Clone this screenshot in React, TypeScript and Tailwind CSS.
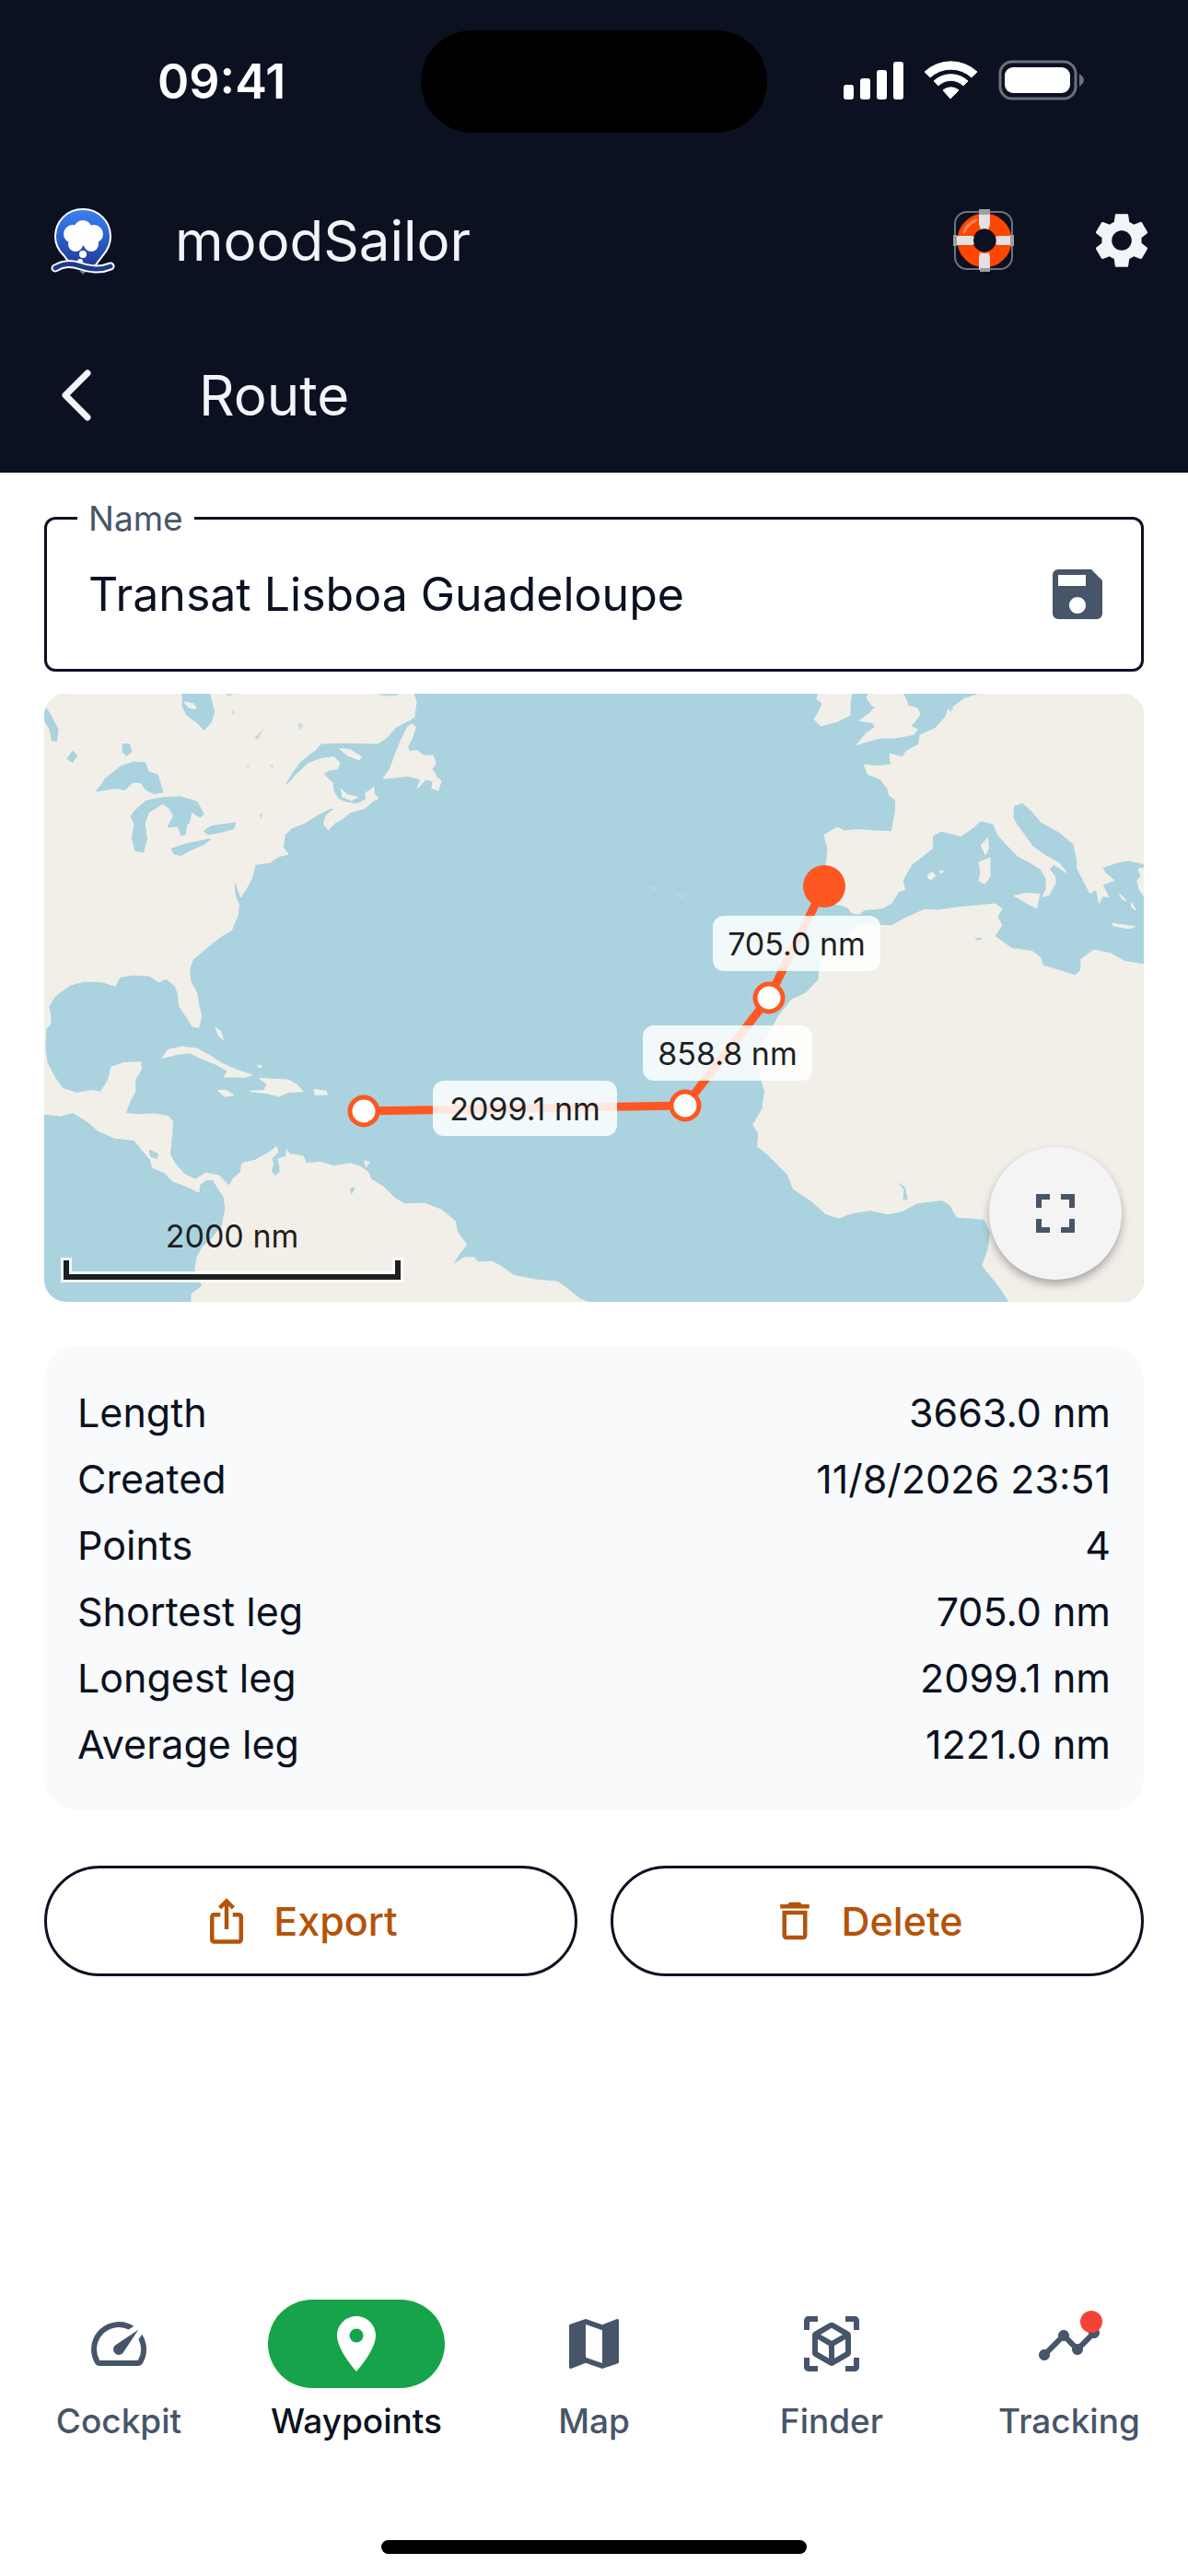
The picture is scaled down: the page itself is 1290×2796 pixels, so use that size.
import { useState } from "react";
import type { ReactNode } from "react";
import {
    MdDeleteOutline,
    MdFullscreen,
    MdIosShare,
    MdMap,
    MdPlace,
    MdSave,
    MdSettings,
    MdSpeed,
    MdTimeline,
} from "react-icons/md";

interface Stat {
    label: string;
    value: string;
}

interface NavItem {
    label: string;
    icon: ReactNode;
    active?: boolean;
    badge?: boolean;
}

const STATS: Stat[] = [
    { label: "Length", value: "3663.0 nm" },
    { label: "Created", value: "11/8/2026 23:51" },
    { label: "Points", value: "4" },
    { label: "Shortest leg", value: "705.0 nm" },
    { label: "Longest leg", value: "2099.1 nm" },
    { label: "Average leg", value: "1221.0 nm" },
];

const WAYPOINTS = [
    { x: 347, y: 453 },
    { x: 696, y: 447 },
    { x: 787, y: 330 },
];

const LEGS = [
    { x: 522, y: 450, width: 200, text: "2099.1 nm" },
    { x: 742, y: 390, width: 184, text: "858.8 nm" },
    { x: 817, y: 271, width: 182, text: "705.0 nm" },
];

const NAV: NavItem[] = [
    { label: "Cockpit", icon: <MdSpeed size={72} /> },
    { label: "Waypoints", icon: <MdPlace size={72} />, active: true },
    { label: "Map", icon: <MdMap size={72} /> },
    { label: "Finder", icon: <CubeScanIcon /> },
    { label: "Tracking", icon: <MdTimeline size={72} />, badge: true },
];

function CubeScanIcon() {
    return (
        <svg width="72" height="72" viewBox="0 0 24 24" fill="currentColor" aria-hidden="true">
            <path d="M17 22V20H20V17H22V20.5C22 20.89 21.84 21.24 21.54 21.54C21.24 21.84 20.89 22 20.5 22H17M7 22H3.5C3.11 22 2.76 21.84 2.46 21.54C2.16 21.24 2 20.89 2 20.5V17H4V20H7V22M17 2H20.5C20.89 2 21.24 2.16 21.54 2.46C21.84 2.76 22 3.11 22 3.5V7H20V4H17V2M7 2V4H4V7H2V3.5C2 3.11 2.16 2.76 2.46 2.46C2.76 2.16 3.11 2 3.5 2H7M13 17.25L17 14.95V10.36L13 12.66V17.25M12 10.92L16 8.63L12 6.28L8 8.63L12 10.92M7 14.95L11 17.25V12.66L7 10.36V14.95M18.23 7.59C18.73 7.91 19 8.34 19 8.91V15.23C19 15.8 18.73 16.23 18.23 16.55L12.75 19.73C12.25 20.05 11.75 20.05 11.25 19.73L5.77 16.55C5.27 16.23 5 15.8 5 15.23V8.91C5 8.34 5.27 7.91 5.77 7.59L11.25 4.41C11.5 4.28 11.75 4.22 12 4.22C12.25 4.22 12.5 4.28 12.75 4.41L18.23 7.59Z" />
        </svg>
    );
}

function LogoIcon() {
    return (
        <svg width="72" height="74" viewBox="0 0 72 74" aria-hidden="true">
            <defs>
                <linearGradient id="pin" x1="0" y1="0" x2="0" y2="1">
                    <stop offset="0" stopColor="#3b82f6" />
                    <stop offset="1" stopColor="#1e3a9a" />
                </linearGradient>
            </defs>
            <path d="M32 70h9l-5 4z" fill="#64748b" />
            <path
                d="M36 3C19 3 6 16 6 33c0 9 4 15 9 20l10 13h23l10-13c5-6 8-12 8-20C66 16 53 3 36 3z"
                fill="url(#pin)"
                stroke="#fff"
                strokeWidth="2"
            />
            <g fill="#fff">
                <circle cx="36" cy="25" r="10" />
                <circle cx="25" cy="30" r="10" />
                <circle cx="48" cy="30" r="10" />
                <circle cx="28" cy="41" r="8" />
                <circle cx="45" cy="41" r="8" />
                <circle cx="36" cy="33" r="10" />
                <circle cx="36" cy="52" r="4" />
                <circle cx="33" cy="60" r="3" />
            </g>
            <path d="M6 67c10-6 18-5 28-2s20 5 32 0" fill="none" stroke="#fff" strokeWidth="9" strokeLinecap="round" />
            <path d="M6 67c10-6 18-5 28-2s20 5 32 0" fill="none" stroke="#1e3a8a" strokeWidth="5" strokeLinecap="round" />
        </svg>
    );
}

function LifebuoyIcon() {
    return (
        <svg width="72" height="72" viewBox="0 0 72 72" aria-hidden="true">
            <rect x="5" y="5" width="62" height="62" rx="13" fill="none" stroke="#6b7280" strokeWidth="2" />
            <circle cx="37" cy="36" r="21" fill="none" stroke="#ff4500" strokeWidth="17" />
            <path d="M15 27q3-9 13-13" fill="none" stroke="#ff8a65" strokeWidth="3" strokeLinecap="round" />
            <g fill="#e2e2e4">
                <path d="M31 5h12v14l-2 5q-4-2-8 0l-2-5z" />
                <path d="M31 68h12V55l-1-6q-5 2-10 0l-1 6z" />
                <path d="M5 31h18l3 1q-2 4 0 8l-3 1H5z" />
                <path d="M68 31H52l-3 1q2 4 0 8l3 1h16z" />
            </g>
            <g fill="#9ca0a2">
                <path d="M31 2h12v6H31zM32 66h11v4H32zM3 30h4v12H3zM65 30h4v12h-4z" />
            </g>
        </svg>
    );
}

function StatusBar() {
    return (
        <div className="grid h-[177px] grid-cols-3 items-center text-white">
            <span className="pl-[171px] text-[52px] leading-none font-semibold">09:41</span>
            <div className="mx-auto h-[111px] w-[376px] rounded-full bg-black" />
            <svg className="mr-[112px] ml-auto" width="264" height="48" viewBox="0 0 264 48" aria-hidden="true">
                <g fill="#fff">
                    <rect x="2" y="27" width="11" height="16" rx="3" />
                    <rect x="20" y="20" width="11" height="23" rx="3" />
                    <rect x="38" y="11" width="11" height="32" rx="3" />
                    <rect x="56" y="2" width="11" height="41" rx="3" />
                    <path d="M90 13A42 42 0 0 1 147 13L141 19A33 33 0 0 0 96 19Z" stroke="#fff" strokeLinejoin="round" />
                    <path d="M100 23A27 27 0 0 1 137 23L132 28A19 19 0 0 0 105 28Z" stroke="#fff" strokeLinejoin="round" />
                    <path d="M110 33A13 13 0 0 1 127 33L118 42Z" stroke="#fff" strokeLinejoin="round" />
                    <rect x="177" y="8" width="71" height="28" rx="9" />
                </g>
                <rect x="172" y="2" width="82" height="40" rx="13" fill="none" stroke="#6d717b" strokeWidth="3" />
                <path d="M258 15q10 7 0 14z" fill="#6d717b" />
            </svg>
        </div>
    );
}

function Header() {
    return (
        <header className="bg-[#0b1120] text-slate-100">
            <StatusBar />
            <div className="flex h-[168px] items-center pr-9 pl-[54px]">
                <LogoIcon />
                <h1 className="ml-16 text-[60px] leading-none">moodSailor</h1>
                <button type="button" aria-label="Help" className="ml-auto">
                    <LifebuoyIcon />
                </button>
                <button type="button" aria-label="Settings" className="ml-[78px]">
                    <MdSettings size={72} />
                </button>
            </div>
            <div className="flex h-[168px] items-center pl-12">
                <button type="button" aria-label="Back">
                    <svg width="72" height="72" viewBox="0 0 72 72" fill="none" stroke="currentColor" aria-hidden="true">
                        <path d="M47 12L23 36l24 24" strokeWidth="7" strokeLinecap="round" strokeLinejoin="round" />
                    </svg>
                </button>
                <h2 className="ml-24 text-[60px] leading-none">Route</h2>
            </div>
        </header>
    );
}

/** Coastlines are traced on two tiles, one for each side of the Atlantic */
function Coastlines() {
    return (
        <g fill="#f2efe9" stroke="#f2efe9" strokeWidth="3" strokeLinejoin="round">
            {/* Americas */}
            <g transform="translate(-8 -13) scale(0.3954 0.4401)">
                <path d="M10 20L1030 20 1042 50 1036 88 1000 105 985 112 960 138 935 152 860 150 820 150 780 152 765 168 745 180 720 200 700 225 678 258 690 252 710 232 745 202 780 190 815 186 832 200 825 215 800 218 786 228 812 250 814 270 828 290 850 298 880 302 905 290 902 275 915 268 925 260 927 278 937 287 920 296 900 312 860 322 835 340 818 348 800 364 788 350 795 330 820 312 805 312 770 328 735 348 700 360 680 378 676 410 690 425 665 430 640 445 600 450 590 485 575 510 560 530 548 500 540 490 545 530 555 550 552 575 540 600 535 612 510 625 480 645 450 668 428 685 418 710 422 740 440 770 445 800 452 825 444 852 428 850 410 825 392 800 388 770 380 750 355 732 335 740 310 725 265 722 228 728 215 750 180 740 130 738 90 748 50 775 32 800 38 830 36 846 25 855 22 900 28 940 48 975 70 1003 110 1015 150 1008 175 1012 195 985 205 950 240 940 285 938 287 955 270 980 270 1010 255 1035 243 1065 280 1068 325 1066 360 1072 373 1085 370 1120 365 1165 380 1190 405 1215 435 1228 465 1212 500 1218 528 1244 540 1225 560 1210 563 1188 600 1180 640 1160 658 1147 662 1160 645 1175 648 1190 643 1208 655 1220 668 1210 668 1195 662 1178 700 1166 730 1170 740 1188 780 1185 815 1195 860 1188 885 1195 910 1210 918 1228 950 1245 985 1275 1010 1288 1065 1287 1110 1302 1148 1330 1155 1358 1180 1388 1160 1410 1140 1440 1175 1420 1200 1420 1212 1432 1250 1430 1280 1445 1310 1465 1370 1475 1430 1480 1460 1500 1490 1522 1550 1545 425 1545 425 1510 455 1490 435 1450 440 1420 455 1395 485 1370 510 1340 518 1300 514 1270 495 1245 485 1228 465 1228 447 1240 445 1258 425 1250 400 1240 375 1232 350 1210 318 1198 312 1178 290 1155 268 1130 215 1125 170 1108 140 1085 100 1062 65 1070 10 1065Z" />
                <path d="M1030 105L1040 112 1030 140 1018 160 1022 172 1045 170 1060 182 1088 182 1095 200 1085 215 1098 235 1110 245 1102 268 1085 262 1088 245 1068 240 1045 262 1055 240 1020 232 985 236 952 238 970 215 982 185 1000 145 1018 112Z" />
                <path d="M832 165L860 168 890 185 885 192 855 182Z" />
                <path d="M836 265L850 278 880 285 865 292 840 284Z" />
                <path d="M345 928L360 908 400 900 440 905 475 922 505 940 550 958 590 970 570 975 515 974 525 960 490 942 455 930 420 915 385 918Z" />
                <path d="M498 1008L520 1008 540 1020 515 1022Z" />
                <path d="M585 1010L625 1008 632 992 612 978 650 980 690 982 715 995 730 1010 690 1012 665 1022 635 1015Z" />
                <path d="M762 1006L795 1010 797 1018 764 1018Z" />
                <path d="M491 854L504 862 512 882 498 870Z" />
                <path d="M686 1155L695 1165 685 1170ZM900 1182L912 1185 904 1196ZM606 946L618 948 612 952Z" />
                <g fill="#aad3df" stroke="#aad3df">
                    <path d="M400 20L472 20 487 75 478 100 460 118 440 100 412 82 400 60Z" />
                    <path d="M12 50L35 78 58 118 54 146 42 144 36 118 12 80Z" />
                    <path d="M164 270L190 238 232 208 265 198 298 200 306 222 332 230 346 272 322 276 300 266 285 248 262 248 242 266 215 262Z" />
                    <path d="M270 318L300 294 345 286 395 284 440 296 458 326 448 334 425 320 418 348 412 350 408 376 396 378 388 356 360 358 376 330 362 310 345 300 325 312 308 320 296 350 302 388 292 420 270 416 262 385 268 350 258 332Z" />
                    <path d="M370 412L410 400 476 388 460 400 425 414 395 428 376 424ZM460 368L480 356 545 348 540 362 510 370 470 376Z" />
                    <path d="M236 154L254 154 260 172 246 182 236 172ZM84 190L98 172 110 182 98 198ZM310 1155L332 1165 330 1175 312 1170ZM862 1250L872 1248 864 1262Z" />
                    <path
                        d="M598 140L622 116 606 142ZM718 102L730 106 722 118ZM576 206L582 206 580 212ZM640 206L650 206 646 212ZM612 328L618 324 616 338ZM536 70L544 76 538 80ZM518 26L540 30 525 36ZM940 30L1000 28 985 34 945 35Z"
                        strokeWidth="1"
                        opacity="0.7"
                    />
                </g>
                <path d="M406 50L430 55 438 66 418 64Z" />
            </g>

            {/* Europe and Africa */}
            <g transform="translate(592 -13) scale(0.3954 0.4401)">
                <path d="M1075 20L1065 32 1030 42 1000 62 985 70 978 88 950 115 908 132 905 155 870 172 860 186 825 178 828 205 790 208 755 205 765 228 800 240 820 265 824 280 842 292 840 325 830 370 780 368 740 365 700 368 680 360 645 378 655 410 652 440 640 500 645 520 650 545 690 550 708 555 722 570 740 573 755 562 805 558 830 545 848 518 866 512 860 490 885 450 915 430 942 410 942 380 965 368 1000 375 1020 380 1045 365 1075 342 1110 350 1120 375 1150 405 1175 428 1210 445 1240 462 1255 485 1255 510 1245 530 1262 525 1280 495 1278 480 1262 462 1275 450 1310 470 1290 448 1245 425 1215 405 1200 385 1175 355 1163 335 1165 305 1190 298 1215 318 1240 345 1290 370 1330 400 1340 440 1340 460 1360 495 1375 520 1392 512 1400 545 1408 528 1425 530 1408 500 1440 490 1415 470 1408 458 1450 445 1480 440 1540 452 1540 20Z" />
                <path d="M1540 455L1508 462 1515 480 1505 490 1510 512 1525 530 1540 540Z" />
                <path d="M740 600L830 602 865 585 920 562 960 564 1000 558 1070 552 1115 548 1132 560 1120 580 1132 600 1112 628 1160 658 1215 665 1238 680 1245 700 1300 715 1335 725 1350 712 1350 685 1385 662 1430 670 1470 690 1540 700 1540 1545 1165 1545 1125 1490 1080 1440 1095 1400 1102 1360 1085 1325 1010 1320 990 1290 970 1278 900 1285 860 1305 820 1312 770 1303 720 1310 685 1322 650 1312 610 1280 560 1250 545 1215 490 1165 462 1145 465 1115 450 1092 475 1055 482 1010 470 975 465 930 480 890 520 825 555 785 595 768 630 735 632 705 650 660 700 640 735 600Z" />
                <path d="M630 20L625 42 640 52 632 72 618 92 635 108 680 98 715 82 716 50 722 20Z" />
                <path d="M770 20L762 40 778 60 790 58 770 78 742 96 778 100 785 112 760 128 735 155 775 144 800 138 840 138 890 130 900 118 882 110 908 80 900 65 875 60 870 45 855 20Z" />
                <path d="M1094 386L1096 410 1088 426 1076 404ZM1100 434L1100 480 1085 498 1070 490 1075 470 1070 446Z" />
                <path d="M1168 528L1200 522 1236 524 1228 558 1200 545ZM1436 596L1498 604 1480 608 1440 602Z" />
                <path d="M928 480L940 470 950 478 938 488ZM962 468L972 466 968 472ZM1456 524L1474 540 1464 536ZM1488 545L1500 562 1490 556Z" />
                <path d="M166 504L188 510 176 512ZM240 526L264 528 250 532ZM438 764L444 768 438 770Z" opacity="0.2" />
                <path
                    d="M848 1236L866 1246 874 1276 862 1278 864 1252ZM1058 632L1080 632 1068 638ZM990 62L1000 66 990 74Z"
                    fill="#aad3df"
                    stroke="#aad3df"
                    strokeWidth="1"
                />
            </g>
        </g>
    );
}

function RouteMap() {
    return (
        <section aria-label="Route map" className="relative mt-6 aspect-[199/110] overflow-hidden rounded-3xl bg-[#aad3df]">
            <svg className="h-full w-full" viewBox="0 0 1194 660" fontSize="34">
                <Coastlines />

                <path d="M347 453L696 447 787 330 847 209" fill="none" stroke="#ff5722" strokeWidth="9" strokeLinejoin="round" />
                {LEGS.map((leg) => (
                    <g key={leg.text}>
                        <rect x={leg.x - leg.width / 2} y={leg.y - 30} width={leg.width} height="60" rx="12" fill="#fff" fillOpacity="0.85" />
                        <text x={leg.x} y={leg.y + 13} textAnchor="middle" fill="#1f1f1f">
                            {leg.text}
                        </text>
                    </g>
                ))}
                {WAYPOINTS.map((point) => (
                    <circle key={point.x} cx={point.x} cy={point.y} r="15" fill="#fff" stroke="#ff5722" strokeWidth="5" />
                ))}
                <circle cx="847" cy="209" r="23" fill="#ff5722" />

                {/* Scale bar */}
                <text x="204" y="601" textAnchor="middle" fill="#1f1f1f">
                    2000 nm
                </text>
                <path d="M24 618v15h360v-15" fill="none" stroke="#fff" strokeOpacity="0.8" strokeWidth="12" strokeLinecap="square" />
                <path d="M24 615v18h360v-18" fill="none" stroke="#1f1f1f" strokeWidth="6" />
            </svg>

            <button
                type="button"
                aria-label="Full screen"
                className="absolute right-6 bottom-6 flex size-36 items-center justify-center rounded-full bg-[#f4f4f4] text-[#475569] shadow-[0_5px_10px_rgba(0,0,0,0.3)]"
            >
                <MdFullscreen size={72} />
            </button>
        </section>
    );
}

function NameField() {
    const [name, setName] = useState("Transat Lisboa Guadeloupe");

    return (
        <div className="relative flex h-[168px] items-center rounded-xl border-3 border-[#0b1120] pr-[33px] pl-[45px]">
            <label htmlFor="route-name" className="absolute -top-[22px] left-[33px] bg-white px-3 text-[37px] leading-[42px] text-[#475569]">
                Name
            </label>
            <input
                id="route-name"
                value={name}
                onChange={(e) => setName(e.target.value)}
                className="min-w-0 flex-1 bg-transparent text-[50px] leading-[72px] outline-none"
            />
            <button type="button" aria-label="Save" className="text-[#475569]">
                <MdSave size={72} />
            </button>
        </div>
    );
}

function StatsCard() {
    return (
        <section className="mt-12 rounded-[36px] bg-slate-50 p-9">
            <table className="w-full text-[43px] leading-[72px]">
                <tbody>
                    {STATS.map((stat) => (
                        <tr key={stat.label}>
                            <th scope="row" className="p-0 text-left font-normal">
                                {stat.label}
                            </th>
                            <td className="p-0 text-right">{stat.value}</td>
                        </tr>
                    ))}
                </tbody>
            </table>
        </section>
    );
}

function ActionButton({ icon, children }: { icon: ReactNode; children: ReactNode }) {
    return (
        <button
            type="button"
            className="flex h-[120px] flex-1 items-center justify-center gap-6 rounded-full border-3 border-[#0b1120] pr-[72px] pl-12 text-[43px] font-medium text-[#b45309]"
        >
            {icon}
            {children}
        </button>
    );
}

function BottomNav() {
    return (
        <nav className="mt-auto">
            <div className="grid h-60 grid-cols-5 pt-[42px]">
                {NAV.map((item) => (
                    <a
                        key={item.label}
                        href="#"
                        aria-current={item.active ? "page" : undefined}
                        className={`flex flex-col items-center gap-3 text-[37px] leading-[48px] font-medium ${
                            item.active ? "text-[#0b1120]" : "text-[#475569]"
                        }`}
                    >
                        <span
                            className={`flex h-24 w-48 items-center justify-center rounded-full ${
                                item.active ? "bg-[#16a34a] text-white" : ""
                            }`}
                        >
                            <span className="relative">
                                {item.icon}
                                {item.badge && <span className="absolute top-0 right-0 size-6 rounded-full bg-[#f44336]" />}
                            </span>
                        </span>
                        {item.label}
                    </a>
                ))}
            </div>
            {/* Home indicator */}
            <div className="flex h-[102px] items-end justify-center pb-6">
                <div className="h-[15px] w-[462px] rounded-full bg-black" />
            </div>
        </nav>
    );
}

export default function App() {
    return (
        <div className="flex min-h-screen flex-col bg-white font-['Inter',sans-serif] text-[#0b1120]">
            <Header />
            <main className="px-12 pt-12">
                <NameField />
                <RouteMap />
                <StatsCard />
                <div className="mt-[60px] flex gap-9">
                    <ActionButton icon={<MdIosShare size={54} />}>Export</ActionButton>
                    <ActionButton icon={<MdDeleteOutline size={54} />}>Delete</ActionButton>
                </div>
            </main>
            <BottomNav />
        </div>
    );
}
